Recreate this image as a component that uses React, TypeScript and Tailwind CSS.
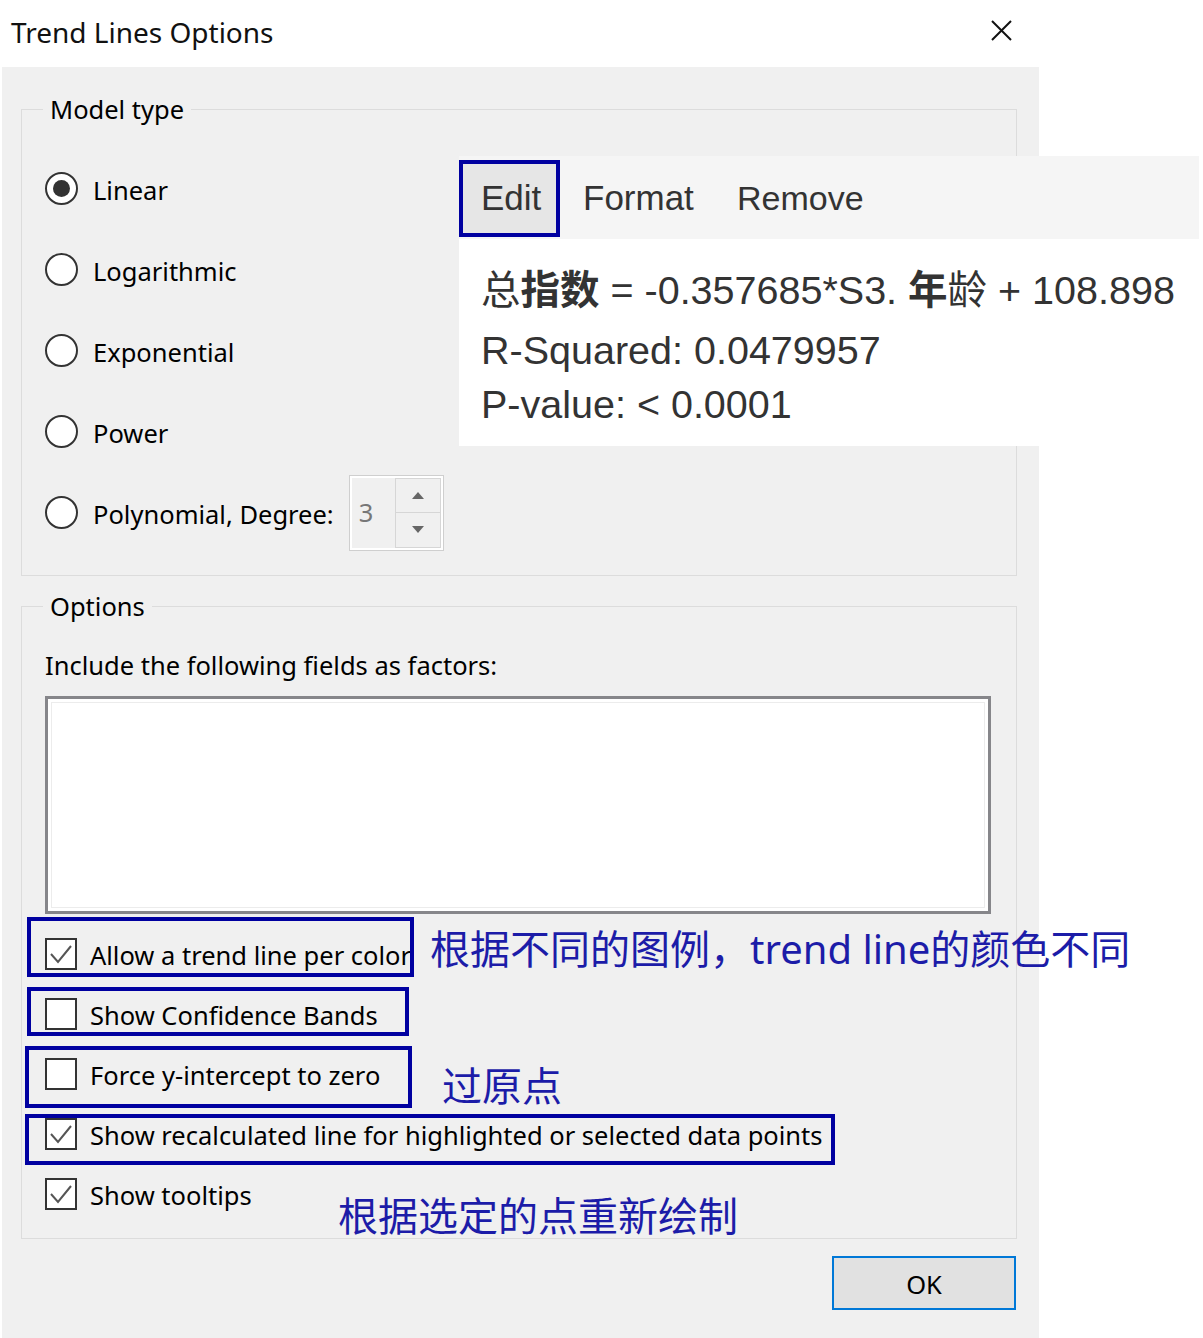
import React from 'react';

function Radio({ label, checked, children }: { label: string; checked?: boolean; children?: React.ReactNode }) {
  return (
    <div className="flex h-[81px] items-center">
      <span className="flex h-[33px] w-[33px] shrink-0 items-center justify-center rounded-full border-2 border-[#333] bg-white">
        {checked && <span className="h-[17px] w-[17px] rounded-full bg-[#333]" />}
      </span>
      <span className="ml-[15px] pt-[4px] text-[25.5px] text-black">{label}</span>
      {children}
    </div>
  );
}

function Check({
  label,
  checked,
  children,
}: {
  label: string;
  checked?: boolean;
  children?: React.ReactNode;
}) {
  return (
    <div className="relative flex h-[60px] items-center">
      <span className="flex h-[32px] w-[32px] shrink-0 items-center justify-center border-2 border-[#333] bg-white">
        {checked && (
          <svg width="28" height="28" viewBox="0 0 28 28">
            <path d="M4 14 L11 22 L24 6" fill="none" stroke="#555" strokeWidth="2" />
          </svg>
        )}
      </span>
      <span className="ml-[13px] whitespace-nowrap pt-[2px] text-[25.5px] text-black">{label}</span>
      {children}
    </div>
  );
}

function Spinner() {
  return (
    <div className="ml-[15px] flex h-[76px] w-[95px] border border-[#cfcfcf] bg-white p-[2px]">
      <div className="flex flex-1 items-center bg-[#f0f0f0] pl-[7px] text-[25.5px] text-[#777]">3</div>
      <div className="flex w-[46px] flex-col border border-[#d6d6d6] bg-[#f0f0f0]">
        <div className="flex flex-1 items-center justify-center border-b border-[#d6d6d6]">
          <svg width="12" height="7" viewBox="0 0 12 7">
            <path d="M0 7 L6 0 L12 7 Z" fill="#666" />
          </svg>
        </div>
        <div className="flex flex-1 items-center justify-center">
          <svg width="12" height="7" viewBox="0 0 12 7">
            <path d="M0 0 L6 7 L12 0 Z" fill="#666" />
          </svg>
        </div>
      </div>
    </div>
  );
}

export default function App() {
  return (
    <div className="relative h-[1338px] w-[1203px] overflow-hidden bg-white font-['Noto_Sans','Noto_Sans_CJK_SC',sans-serif] text-black">
      {/* title bar */}
      <div className="flex h-[67px] items-center justify-between pb-[4px] pl-[11px] pr-[191px]">
        <span className="text-[28px] text-[#111]">Trend Lines Options</span>
        <svg width="21" height="21" viewBox="0 0 21 21" className="-mt-[2px]">
          <path d="M1 1 L20 20 M20 1 L1 20" stroke="#111" strokeWidth="2" />
        </svg>
      </div>

      <div className="ml-[2px] h-[1271px] w-[1037px] bg-[#f0f0f0] pt-[25px]">
        <fieldset className="ml-[19px] w-[996px] border border-[#dcdcdc] px-[23px] pb-[22px] pt-[22px]">
          <legend className="-ml-[2px] px-[7px] text-[25.5px] leading-[34px]">Model type</legend>
          <Radio label="Linear" checked />
          <Radio label="Logarithmic" />
          <Radio label="Exponential" />
          <Radio label="Power" />
          <Radio label="Polynomial, Degree:">
            <Spinner />
          </Radio>
        </fieldset>

        <fieldset className="ml-[19px] mt-[13px] w-[996px] border border-[#dcdcdc] px-[23px] pb-[14px] pt-[25px]">
          <legend className="-ml-[2px] px-[7px] text-[25.5px] leading-[34px]">Options</legend>
          <div className="text-[25.5px] leading-[34px]">Include the following fields as factors:</div>
          <div className="mt-[14px] h-[218px] w-[946px] border-[3px] border-[#86868a] bg-white p-[3px]">
            <div className="h-full w-full border border-[#ececec]" />
          </div>

          <div className="mt-[10px] flex flex-col">
            <Check label="Allow a trend line per color" checked>
              <div className="absolute -left-[18px] -top-[7px] h-[60px] w-[387px] border-4 border-[#0000a0]" />
              <div className="absolute left-[385px] top-[5px] whitespace-nowrap text-[40px] leading-[40px] text-[#1c1ca8]">
                根据不同的图例，trend line的颜色不同
              </div>
            </Check>
            <Check label="Show Confidence Bands">
              <div className="absolute -left-[18px] top-[3px] h-[49px] w-[382px] border-4 border-[#0000a0]" />
            </Check>
            <Check label="Force y-intercept to zero">
              <div className="absolute -left-[20px] top-[2px] h-[62px] w-[387px] border-4 border-[#0000a0]" />
              <div className="absolute left-[397px] top-[22px] whitespace-nowrap text-[40px] leading-[40px] text-[#1c1ca8]">
                过原点
              </div>
            </Check>
            <Check label="Show recalculated line for highlighted or selected data points" checked>
              <div className="absolute -left-[20px] top-[10px] h-[51px] w-[810px] border-4 border-[#0000a0]" />
            </Check>
            <Check label="Show tooltips" checked>
              <div className="absolute left-[293px] top-[32px] whitespace-nowrap text-[40px] leading-[40px] text-[#1c1ca8]">
                根据选定的点重新绘制
              </div>
            </Check>
          </div>
        </fieldset>

        <div className="mt-[17px] flex justify-end pr-[23px]">
          <button className="flex h-[54px] w-[184px] items-center justify-center border-2 border-[#0078d7] bg-[#e1e1e1] pt-[3px] text-[25.5px] text-black">
            OK
          </button>
        </div>
      </div>

      {/* trend line context popup */}
      <div className="absolute left-[459px] top-[156px] w-[740px] font-['Liberation_Sans','Noto_Sans_CJK_SC',sans-serif] text-[#333]">
        <div className="flex h-[83px] items-start bg-[#f5f5f5] pt-[4px]">
          <div className="flex h-[77px] w-[101px] items-center border-4 border-[#0000a0] bg-[#e6e6e6] pl-[18px] text-[35px]">
            Edit
          </div>
          <div className="ml-[23px] flex h-[77px] w-[154px] items-center text-[35px]">Format</div>
          <div className="flex h-[77px] items-center text-[34px]">Remove</div>
        </div>
        <div className="h-[207px] w-[580px] bg-white pl-[22px] pt-[21px] text-[39.5px]">
          <div className="whitespace-nowrap leading-[60px]">
            总<span className="font-bold">指数</span> = -0.357685*S3. <span className="font-bold">年</span>龄 + 108.898
          </div>
          <div className="whitespace-nowrap leading-[60px]">R-Squared: 0.0479957</div>
          <div className="whitespace-nowrap leading-[48px]">P-value: &lt; 0.0001</div>
        </div>
      </div>
    </div>
  );
}
